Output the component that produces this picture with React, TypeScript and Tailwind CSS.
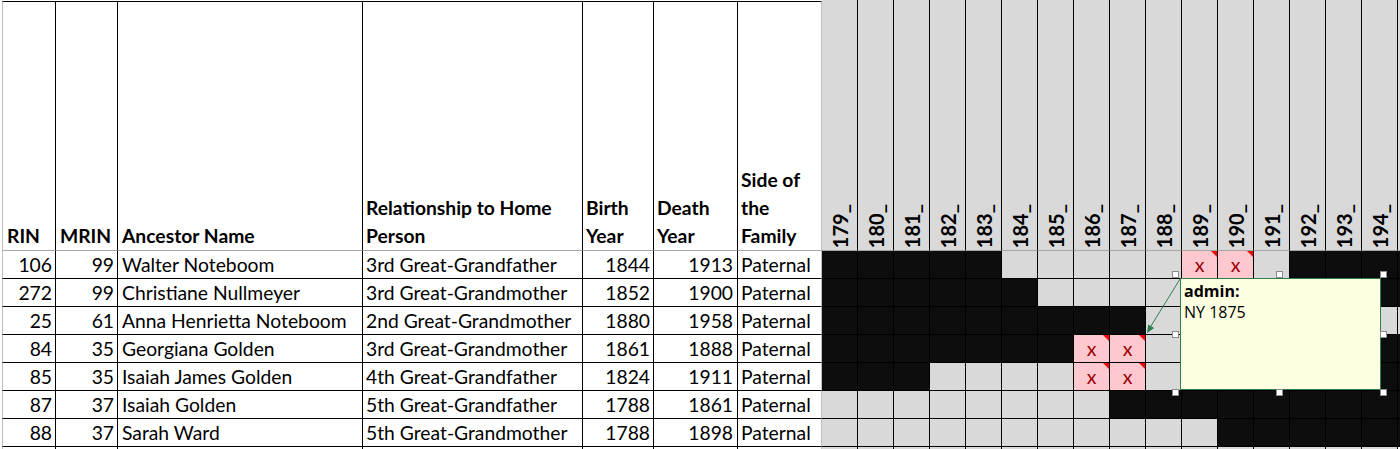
import React from 'react'

type Row = {
  rin: number
  mrin: number
  name: string
  rel: string
  birth: number
  death: number
  side: string
  cells: string
}

const decades = ['179_', '180_', '181_', '182_', '183_', '184_', '185_', '186_', '187_', '188_', '189_', '190_', '191_', '192_', '193_', '194_']

// B = black (not alive), G = gray, X = flagged census
const rows: Row[] = [
  { rin: 106, mrin: 99, name: 'Walter Noteboom', rel: '3rd Great-Grandfather', birth: 1844, death: 1913, side: 'Paternal', cells: 'BBBBBGGGGGXXGBBBB' },
  { rin: 272, mrin: 99, name: 'Christiane Nullmeyer', rel: '3rd Great-Grandmother', birth: 1852, death: 1900, side: 'Paternal', cells: 'BBBBBBGGGGGGGBBBB' },
  { rin: 25, mrin: 61, name: 'Anna Henrietta Noteboom', rel: '2nd Great-Grandmother', birth: 1880, death: 1958, side: 'Paternal', cells: 'BBBBBBBBBGGGGGGGG' },
  { rin: 84, mrin: 35, name: 'Georgiana Golden', rel: '3rd Great-Grandmother', birth: 1861, death: 1888, side: 'Paternal', cells: 'BBBBBBBXXGGGGBBBB' },
  { rin: 85, mrin: 35, name: 'Isaiah James Golden', rel: '4th Great-Grandfather', birth: 1824, death: 1911, side: 'Paternal', cells: 'BBBGGGGXXGGGGBBBB' },
  { rin: 87, mrin: 37, name: 'Isaiah Golden', rel: '5th Great-Grandfather', birth: 1788, death: 1861, side: 'Paternal', cells: 'GGGGGGGGBBBBBBBBB' },
  { rin: 88, mrin: 37, name: 'Sarah Ward', rel: '5th Great-Grandmother', birth: 1788, death: 1898, side: 'Paternal', cells: 'GGGGGGGGGGGBBBBBB' },
]

function GridCell({ kind }: { kind: string }) {
  if (kind === 'B') {
    return <div className="w-[36px] h-full shrink-0 border-r border-b border-black bg-[#0d0d0d]" />
  }
  if (kind === 'X') {
    return (
      <div className="relative w-[36px] h-full shrink-0 border-r border-b border-black bg-[#ffc7ce] flex items-center justify-center text-[19.5px] leading-[27px] text-[#9c0006]">
        x
        <span className="absolute top-0 right-0 w-0 h-0 border-t-[6px] border-l-[6px] border-t-[#ff0000] border-l-transparent" />
      </div>
    )
  }
  return <div className="w-[36px] h-full shrink-0 border-r border-b border-black bg-[#d9d9d9]" />
}

function DataRow({ r }: { r: Row }) {
  return (
    <div className="flex h-[28px] leading-[27px] text-[19.3px] text-black">
      <div className="w-[54px] shrink-0 border-l border-l-[#bfbfbf] border-r border-b border-black text-right pr-[3px]">{r.rin}</div>
      <div className="w-[62px] shrink-0 border-r border-b border-black text-right pr-[3px]">{r.mrin}</div>
      <div className="w-[245px] shrink-0 border-r border-b border-black pl-[4px] whitespace-nowrap">{r.name}</div>
      <div className="w-[220px] shrink-0 border-r border-b border-black pl-[3px] whitespace-nowrap">{r.rel}</div>
      <div className="w-[71px] shrink-0 border-r border-b border-black text-right pr-[3px]">{r.birth}</div>
      <div className="w-[84px] shrink-0 border-r border-b border-black text-right pr-[4px]">{r.death}</div>
      <div className="w-[84px] shrink-0 border-r border-r-[#bfbfbf] border-b border-b-black pl-[3px]">{r.side}</div>
      {r.cells.split('').map((c, i) => (
        <GridCell key={i} kind={c} />
      ))}
    </div>
  )
}

function Handle({ x, y }: { x: number; y: number }) {
  return (
    <div
      className="absolute w-[7px] h-[7px] bg-white border border-[#8c8c8c]"
      style={{ left: x - 3, top: y - 3 }}
    />
  )
}

export default function App() {
  const hdr = 'shrink-0 mt-px h-[250px] border-t border-b border-t-black border-b-[#a6a6a6] border-r border-r-black flex flex-col justify-end font-bold leading-[28px] pl-[4px]'
  return (
    <div className="relative w-[1400px] h-[449px] overflow-hidden bg-white font-['Lato',sans-serif] text-black">
      <div className="pl-[2px]">
        <div className="flex items-start text-[19.3px]">
          <div className={`${hdr} w-[54px] border-l border-l-[#bfbfbf]`}>RIN</div>
          <div className={`${hdr} w-[62px]`}>MRIN</div>
          <div className={`${hdr} w-[245px]`}>Ancestor Name</div>
          <div className={`${hdr} w-[220px] !pl-[3px]`}>
            <span>Relationship to Home</span>
            <span>Person</span>
          </div>
          <div className={`${hdr} w-[71px] !pl-[3px]`}>
            <span>Birth</span>
            <span>Year</span>
          </div>
          <div className={`${hdr} w-[84px] !pl-[3px]`}>
            <span>Death</span>
            <span>Year</span>
          </div>
          <div className={`${hdr} w-[84px] !pl-[3px] !border-r-[#bfbfbf]`}>
            <span>Side of</span>
            <span>the</span>
            <span>Family</span>
          </div>
          {decades.map((d) => (
            <div
              key={d}
              className="w-[36px] h-[251px] shrink-0 bg-[#d9d9d9] border-r border-r-black border-b border-b-[#a6a6a6] flex items-end justify-center pb-[2px] text-[20px]"
            >
              <span className="[writing-mode:vertical-rl] rotate-180 font-bold leading-[34px]">{d}</span>
            </div>
          ))}
          <div className="w-[36px] h-[251px] shrink-0 bg-[#d9d9d9] border-b border-b-[#a6a6a6]" />
        </div>
        {rows.map((r) => (
          <DataRow key={r.rin} r={r} />
        ))}
        <div className="flex h-[28px]">
          <div className="w-[54px] shrink-0 border-l border-l-[#bfbfbf] border-r border-black" />
          <div className="w-[62px] shrink-0 border-r border-black" />
          <div className="w-[245px] shrink-0 border-r border-black" />
          <div className="w-[220px] shrink-0 border-r border-black" />
          <div className="w-[71px] shrink-0 border-r border-black" />
          <div className="w-[84px] shrink-0 border-r border-black" />
          <div className="w-[84px] shrink-0 border-r border-[#bfbfbf]" />
          {decades.map((d) => (
            <div key={d} className="w-[36px] h-full shrink-0 border-r border-black bg-[#d9d9d9]" />
          ))}
        </div>
      </div>

      {/* comment popup */}
      <svg className="absolute left-0 top-0 pointer-events-none" width={1400} height={449}>
        <line x1={1180} y1={279} x2={1151} y2={326} stroke="#2e7d4f" strokeWidth={1} />
        <polygon points="1147,333 1154.2,328.1 1148.2,324.4" fill="#2e7d4f" />
      </svg>
      <div className="absolute left-[1180px] top-[278px] w-[201px] h-[112px] bg-[#ffffe1] border border-[#2e7d4f] pl-[3px] pt-[2px] font-['Open_Sans',sans-serif] text-[16px] leading-[21px] text-black">
        <div className="font-bold">admin:</div>
        <div>NY 1875</div>
      </div>
      <Handle x={1175} y={274} />
      <Handle x={1279} y={274} />
      <Handle x={1383} y={274} />
      <Handle x={1175} y={334} />
      <Handle x={1383} y={334} />
      <Handle x={1175} y={392} />
      <Handle x={1279} y={392} />
      <Handle x={1383} y={392} />
    </div>
  )
}
